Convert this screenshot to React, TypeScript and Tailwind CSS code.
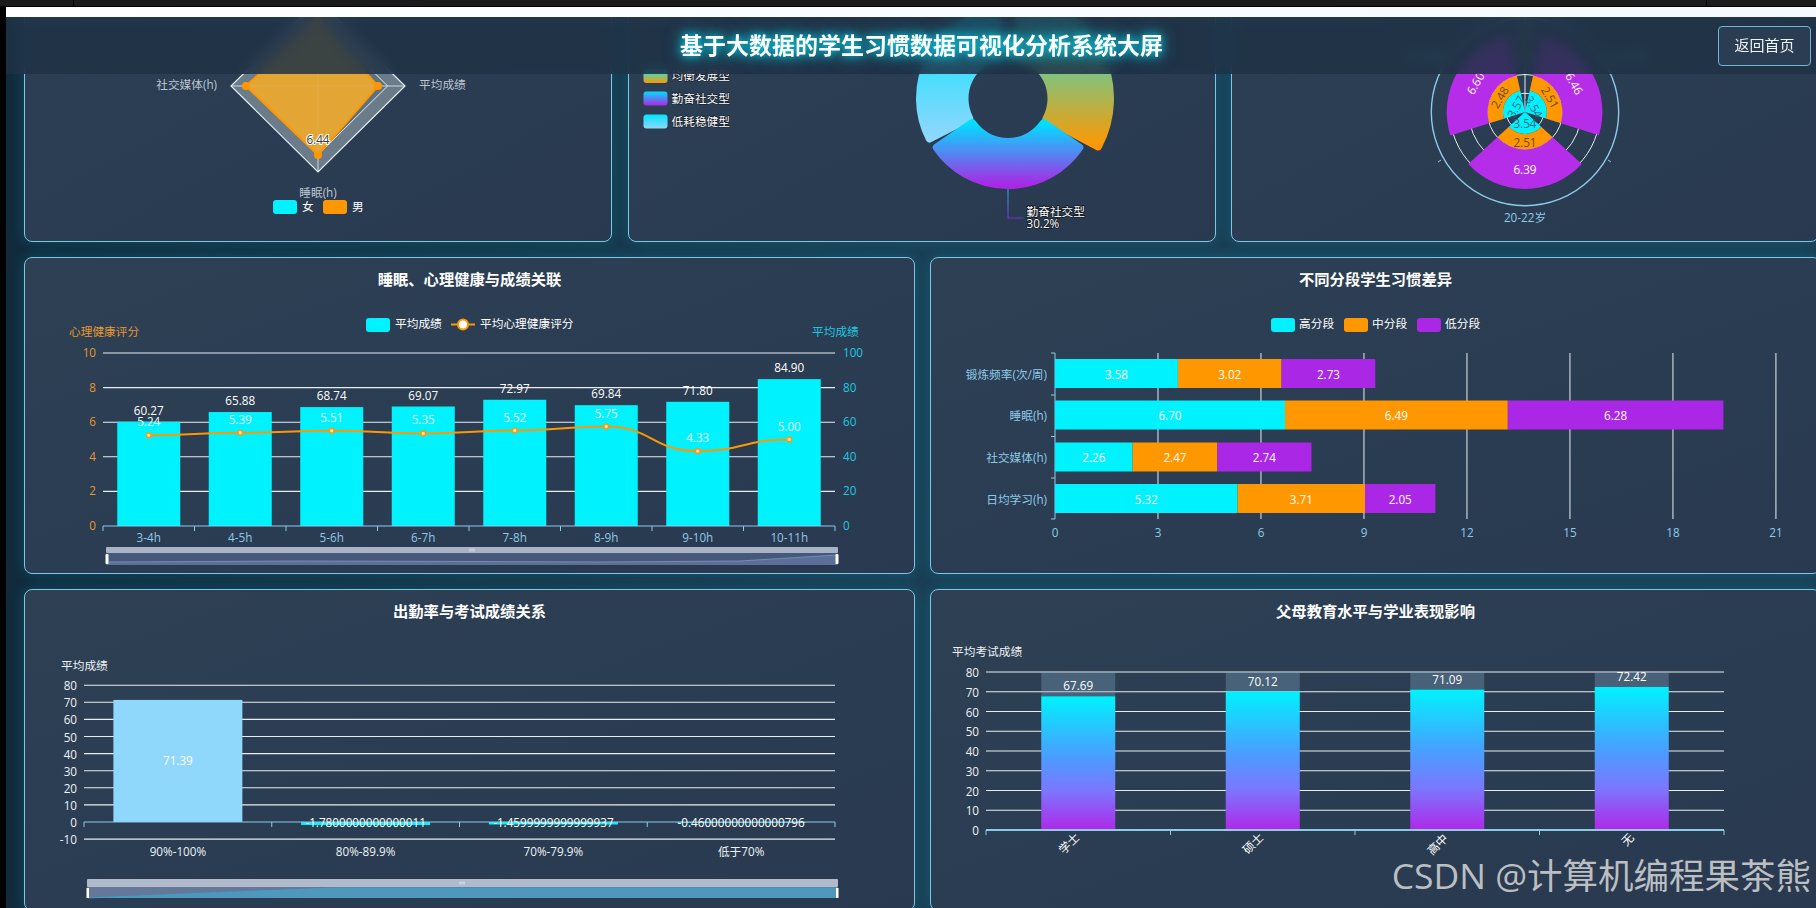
import type { ReactNode, SVGProps } from "react";

const CYAN = "#00f2ff";
const ORANGE = "#ff9800";
const PURPLE = "#ab27e6";
const SKY = "#8ccae8";
const GRID = "#e8eef3";

function Label({ x, y, anchor = "middle", fill = "#ffffff", size = 11.7, children, ...rest }: {
  x: number;
  y: number;
  anchor?: "start" | "middle" | "end";
  fill?: string;
  size?: number;
  children: ReactNode;
} & SVGProps<SVGTextElement>) {
  return (
    <text x={x} y={y} textAnchor={anchor} fill={fill} fontSize={size} dominantBaseline="central" {...rest}>
      {children}
    </text>
  );
}

function Card({ x, y, w, h, title, children }: { x: number; y: number; w: number; h: number; title?: string; children: ReactNode }) {
  const top = title ? 40 : 0;
  return (
    <div className="flex flex-col rounded-lg border border-[#7cc6e6] bg-gradient-to-br from-[#2d4054] to-[#293a50] shadow-[0_0_14px_rgba(0,220,255,0.18)]">
      {title && (
        <div className="flex h-[40px] shrink-0 items-center justify-center pt-[3px] text-[15.3px] font-bold text-white">
          {title}
        </div>
      )}
      <svg
        className="block overflow-hidden"
        width={w - 2}
        height={h - 2 - top}
        viewBox={`${x + 1} ${y + 1 + top} ${w - 2} ${h - 2 - top}`}
      >
        {children}
      </svg>
    </div>
  );
}

// angles are degrees clockwise from 12 o'clock
function pt(cx: number, cy: number, r: number, deg: number) {
  const a = (deg * Math.PI) / 180;
  return `${(cx + r * Math.sin(a)).toFixed(2)} ${(cy - r * Math.cos(a)).toFixed(2)}`;
}

function sector(cx: number, cy: number, r0: number, r1: number, a0: number, a1: number) {
  const big = a1 - a0 > 180 ? 1 : 0;
  return `M${pt(cx, cy, r1, a0)} A${r1} ${r1} 0 ${big} 1 ${pt(cx, cy, r1, a1)} L${pt(cx, cy, r0, a1)} A${r0} ${r0} 0 ${big} 0 ${pt(cx, cy, r0, a0)} Z`;
}

function RadarChart() {
  const cx = 318;
  const cy = 86;
  const ring = (k: number) => `${cx},${cy - 86 * k} ${cx + 87 * k},${cy} ${cx},${cy + 86 * k} ${cx - 87 * k},${cy}`;
  return (
    <g>
      <polygon points={ring(1)} fill="#6a7b8a" stroke={GRID} strokeWidth={1.2} />
      <polygon points={ring(0.8)} fill="#5e7183" stroke={GRID} strokeWidth={1} />
      <polygon points={ring(0.6)} fill="#6a7b8a" stroke={GRID} strokeWidth={1} />
      <line x1={cx - 87} y1={cy} x2={cx + 87} y2={cy} stroke={GRID} strokeWidth={0.8} />
      <line x1={cx} y1={cy - 86} x2={cx} y2={cy + 86} stroke={GRID} strokeWidth={0.8} />
      <polygon points="318,20 378,86 318,155 246,86" fill="#e3a635" stroke={ORANGE} strokeWidth={2} />
      <line x1={246} y1={86} x2={378} y2={86} stroke="#e8b355" strokeWidth={0.6} />
      <line x1={318} y1={20} x2={318} y2={155} stroke="#e8b355" strokeWidth={0.6} />
      {[[378, 86], [318, 155], [246, 86], [318, 20]].map(([px, py]) => (
        <circle key={px + "-" + py} cx={px} cy={py} r={4} fill={ORANGE} />
      ))}
      <Label x={318} y={139} fill="#3a3a3a" stroke="#ffffff" strokeWidth={2} paintOrder="stroke">6.44</Label>
      <Label x={217} y={84} anchor="end" fill="#bcc6d0">社交媒体(h)</Label>
      <Label x={419} y={84} anchor="start" fill="#bcc6d0">平均成绩</Label>
      <Label x={318} y={192} fill="#bcc6d0">睡眠(h)</Label>
      <rect x={273} y={200} width={24} height={14} rx={3} fill={CYAN} />
      <Label x={302} y={206} anchor="start">女</Label>
      <rect x={323} y={200} width={24} height={14} rx={3} fill={ORANGE} />
      <Label x={352} y={206} anchor="start">男</Label>
    </g>
  );
}

function DonutChart() {
  const cx = 1007.5;
  const cy = 98.5;
  return (
    <g>
      <defs>
        <linearGradient id="gBalance" x1="0" y1="0" x2="0" y2="1">
          <stop offset="0" stopColor="#00f0ff" />
          <stop offset="1" stopColor={ORANGE} />
        </linearGradient>
        <linearGradient id="gSocial" x1="0" y1="0" x2="0" y2="1">
          <stop offset="0" stopColor="#00e0ff" />
          <stop offset="1" stopColor={PURPLE} />
        </linearGradient>
        <linearGradient id="gSteady" x1="0" y1="0" x2="0" y2="1">
          <stop offset="0" stopColor="#00e5ff" />
          <stop offset="1" stopColor="#90d7fc" />
        </linearGradient>
        <linearGradient id="gLead" x1="0" y1="0" x2="0" y2="1">
          <stop offset="0" stopColor="#1fa8c8" />
          <stop offset="1" stopColor="#7a2fd0" />
        </linearGradient>
      </defs>
      <rect x={643} y={69} width={24} height={14} rx={3} fill="url(#gBalance)" />
      <rect x={643} y={91.5} width={24} height={14} rx={3} fill="url(#gSocial)" />
      <rect x={643} y={114.5} width={24} height={14} rx={3} fill="url(#gSteady)" />
      {["均衡发展型", "勤奋社交型", "低耗稳健型"].map((t, i) => (
        <Label key={t} x={671} y={74.5 + i * 23} anchor="start" stroke="#10161f" strokeWidth={1} paintOrder="stroke">{t}</Label>
      ))}
      <path d={sector(cx, cy, 43.5, 102, 8, 118)} fill="url(#gBalance)" stroke="url(#gBalance)" strokeWidth={8} strokeLinejoin="round" />
      <path d={sector(cx, cy, 43.5, 88, 243, 352)} fill="url(#gSteady)" stroke="url(#gSteady)" strokeWidth={8} strokeLinejoin="round" />
      <path d={sector(cx, cy, 43.5, 86.5, 124.5, 235.5)} fill="url(#gSocial)" stroke="url(#gSocial)" strokeWidth={8} strokeLinejoin="round" />
      <path d="M1007.5 189 V218 H1023" fill="none" stroke="url(#gLead)" strokeWidth={1.2} />
      <Label x={1026} y={211} anchor="start" stroke="#10161f" strokeWidth={1.4} paintOrder="stroke">勤奋社交型</Label>
      <Label x={1026} y={223} anchor="start" stroke="#10161f" strokeWidth={1.4} paintOrder="stroke">30.2%</Label>
    </g>
  );
}

function PolarChart() {
  const cx = 1525;
  const cy = 112;
  const unit = 6.19;
  const groups = [
    { mid: 300, rot: -60, vals: [3.57, 2.48, 6.6] },
    { mid: 60, rot: 60, vals: [3.54, 2.51, 6.46] },
    { mid: 180, rot: 0, vals: [3.54, 2.51, 6.39] },
  ];
  const colors = [CYAN, ORANGE, "#b52de8"];
  const textColors = ["#236b78", "#6b4a14", "#ffffff"];
  return (
    <g>
      {[18.75, 37.5, 56.25, 75].map((r) => (
        <circle key={r} cx={cx} cy={cy} r={r} fill="none" stroke={GRID} strokeWidth={1} />
      ))}
      <circle cx={cx} cy={cy} r={93.7} fill="none" stroke={SKY} strokeWidth={1.4} />
      <line x1={cx} y1={cy} x2={cx} y2={cy - 93.7} stroke={GRID} strokeWidth={1} />
      <line x1={1441} y1={160} x2={1438} y2={162} stroke={SKY} />
      <line x1={1608} y1={160} x2={1611} y2={162} stroke={SKY} />
      {groups.map((g) => {
        let acc = 0;
        return g.vals.map((v, i) => {
          const r0 = acc * unit;
          const r1 = (acc + v) * unit;
          acc += v;
          const mid = i === 0 ? r1 * 0.5 : (r0 + r1) / 2;
          const p = pt(cx, cy, mid, g.mid).split(" ").map(Number);
          return (
            <g key={g.mid + "-" + i}>
              <path d={sector(cx, cy, Math.max(r0, 0.1), r1, g.mid - 47.5, g.mid + 47.5)} fill={colors[i]} />
              <Label x={p[0]} y={p[1]} fill={textColors[i]} transform={`rotate(${g.rot} ${p[0]} ${p[1]})`}>
                {v.toFixed(2)}
              </Label>
            </g>
          );
        });
      })}
      <Label x={1525} y={217} fill={SKY}>20-22岁</Label>
      <Label x={1424} y={56} fill={SKY}>18-20岁</Label>
      <Label x={1628} y={56} fill={SKY}>22-24岁</Label>
    </g>
  );
}

function SleepChart() {
  const data = [
    ["3-4h", 60.27, 5.24], ["4-5h", 65.88, 5.39], ["5-6h", 68.74, 5.51], ["6-7h", 69.07, 5.35],
    ["7-8h", 72.97, 5.52], ["8-9h", 69.84, 5.75], ["9-10h", 71.8, 4.33], ["10-11h", 84.9, 5.0],
  ] as const;
  const x0 = 103;
  const x1 = 835;
  const base = 526;
  const band = (x1 - x0) / 8;
  const cxs = data.map((_, i) => x0 + band * (i + 0.5));
  const ly = (v: number) => base - v * 17.3;
  let curve = `M${cxs[0]} ${ly(data[0][2])}`;
  for (let i = 1; i < data.length; i++) {
    const mx = (cxs[i - 1] + cxs[i]) / 2;
    curve += ` C${mx} ${ly(data[i - 1][2])} ${mx} ${ly(data[i][2])} ${cxs[i]} ${ly(data[i][2])}`;
  }
  return (
    <g>
      <rect x={366} y={318} width={24} height={14} rx={3} fill={CYAN} />
      <Label x={395} y={323} anchor="start">平均成绩</Label>
      <line x1={451} y1={324.5} x2={475} y2={324.5} stroke={ORANGE} strokeWidth={2} />
      <circle cx={463} cy={324.5} r={5} fill="#ffffff" stroke={ORANGE} strokeWidth={2} />
      <Label x={480} y={323} anchor="start">平均心理健康评分</Label>
      <Label x={69} y={331} anchor="start" fill="#e6962d">心理健康评分</Label>
      <Label x={812} y={331} anchor="start" fill="#1fc8e0">平均成绩</Label>
      {[0, 2, 4, 6, 8, 10].map((v) => (
        <g key={v}>
          {v > 0 && <line x1={x0} y1={ly(v)} x2={x1} y2={ly(v)} stroke={GRID} strokeWidth={1.1} />}
          <Label x={96} y={ly(v) - 1} anchor="end" fill="#e6962d">{v}</Label>
          <Label x={843} y={ly(v) - 1} anchor="start" fill="#1fc8e0">{v * 10}</Label>
        </g>
      ))}
      {data.map((d, i) => (
        <rect key={d[0]} x={cxs[i] - 31.5} y={base - d[1] * 1.73} width={63} height={d[1] * 1.73} fill={CYAN} />
      ))}
      <line x1={x0} y1={base} x2={x1} y2={base} stroke={SKY} strokeWidth={1.2} />
      {data.map((_, i) => (
        <line key={i} x1={x0 + band * i} y1={base} x2={x0 + band * i} y2={base + 5} stroke={SKY} />
      ))}
      <line x1={x1} y1={base} x2={x1} y2={base + 5} stroke={SKY} />
      <path d={curve} fill="none" stroke={ORANGE} strokeWidth={2} />
      {data.map((d, i) => (
        <g key={d[0]}>
          <circle cx={cxs[i]} cy={ly(d[2])} r={2.4} fill="#ffe0a8" stroke={ORANGE} strokeWidth={1.4} />
          <Label x={cxs[i]} y={base - d[1] * 1.73 - 12}>{d[1].toFixed(2)}</Label>
          <Label x={cxs[i]} y={ly(d[2]) - 14} fill="#e4fdff">{d[2].toFixed(2)}</Label>
          <Label x={cxs[i]} y={537} fill={SKY}>{d[0]}</Label>
        </g>
      ))}
      <rect x={106} y={547} width={732} height={6} rx={1} fill="#aab3c6" />
      <rect x={106} y={553} width={732} height={12} fill="#46597a" />
      <path d="M107 565 V562 L300 561 L480 561.5 L600 562 L740 561 L837 555 V565 Z" fill="#5a7099" />
      <path d="M107 562 L300 561 L480 561.5 L600 562 L740 561 L837 555" fill="none" stroke="#7f96bf" strokeWidth={0.8} />
      <rect x={105.5} y={554} width={3} height={10} rx={1} fill="#ffffff" />
      <rect x={835.5} y={554} width={3} height={10} rx={1} fill="#ffffff" />
      <path d="M470 548.5 v3 M472 548.5 v3 M474 548.5 v3" stroke="#e8edf3" strokeWidth={0.8} />
    </g>
  );
}

function HabitChart() {
  const x0 = 1055;
  const unit = 34.33;
  const rows = [
    ["锻炼频率(次/周)", 373.5, [3.58, 3.02, 2.73]],
    ["睡眠(h)", 415, [6.7, 6.49, 6.28]],
    ["社交媒体(h)", 457, [2.26, 2.47, 2.74]],
    ["日均学习(h)", 498.5, [5.32, 3.71, 2.05]],
  ] as const;
  const colors = [CYAN, ORANGE, PURPLE];
  return (
    <g>
      {[[1271, "高分段", CYAN], [1344, "中分段", ORANGE], [1417, "低分段", PURPLE]].map(([lx, t, c]) => (
        <g key={t as string}>
          <rect x={lx as number} y={318} width={24} height={14} rx={3} fill={c as string} />
          <Label x={(lx as number) + 28} y={323} anchor="start">{t}</Label>
        </g>
      ))}
      {[0, 3, 6, 9, 12, 15, 18, 21].map((v) => (
        <g key={v}>
          {v > 0 && <line x1={x0 + v * unit} y1={353} x2={x0 + v * unit} y2={519} stroke={GRID} strokeWidth={1} />}
          <Label x={x0 + v * unit} y={532} fill={SKY}>{v}</Label>
        </g>
      ))}
      <line x1={x0} y1={353} x2={x0} y2={519} stroke={SKY} strokeWidth={1} />
      {[353, 395, 436.5, 478, 519].map((ty) => (
        <line key={ty} x1={x0 - 4} y1={ty} x2={x0} y2={ty} stroke={SKY} />
      ))}
      {rows.map(([name, cy, vals]) => {
        let acc = 0;
        return (
          <g key={name}>
            <Label x={1047} y={cy} anchor="end" fill={SKY}>{name}</Label>
            {vals.map((v, i) => {
              const bx = x0 + acc * unit;
              acc += v;
              return (
                <g key={i}>
                  <rect x={bx} y={cy - 14.5} width={v * unit} height={29} fill={colors[i]} />
                  <Label x={bx + (v * unit) / 2} y={cy}>{v.toFixed(2)}</Label>
                </g>
              );
            })}
          </g>
        );
      })}
    </g>
  );
}

function AttendanceChart() {
  const x0 = 84;
  const x1 = 835;
  const base = 822;
  const band = (x1 - x0) / 4;
  const cxs = [0, 1, 2, 3].map((i) => x0 + band * (i + 0.5));
  const ticks = [80, 70, 60, 50, 40, 30, 20, 10, 0, -10];
  const rows = [
    ["90%-100%", "71.39"],
    ["80%-89.9%", "-1.7800000000000011"],
    ["70%-79.9%", "-1.4599999999999937"],
    ["低于70%", "-0.46000000000000796"],
  ];
  return (
    <g>
      <Label x={61} y={665} anchor="start" fill="#eef2f6">平均成绩</Label>
      {ticks.map((v) => {
        const ty = base - v * 1.71;
        return (
          <g key={v}>
            {v !== 0 && <line x1={x0} y1={ty} x2={x1} y2={ty} stroke={GRID} strokeWidth={1.1} />}
            <Label x={77} y={ty} anchor="end" fill="#eef2f6">{v}</Label>
          </g>
        );
      })}
      <rect x={cxs[0] - 64.5} y={base - 71.39 * 1.71} width={129} height={71.39 * 1.71} fill="#90d7fc" />
      <rect x={cxs[1] - 64.5} y={base} width={129} height={3} fill={CYAN} />
      <rect x={cxs[2] - 64.5} y={base} width={129} height={2.5} fill={CYAN} />
      <rect x={cxs[3] - 64.5} y={base} width={129} height={0.8} fill={CYAN} />
      <line x1={x0} y1={base} x2={x1} y2={base} stroke={SKY} strokeWidth={1.2} />
      {[0, 1, 2, 3, 4].map((i) => (
        <line key={i} x1={x0 + band * i} y1={base} x2={x0 + band * i} y2={base + 5} stroke={SKY} />
      ))}
      {rows.map(([name, val], i) => (
        <g key={name}>
          <Label x={cxs[i]} y={i === 0 ? 760 : 822}>{val}</Label>
          <Label x={cxs[i]} y={851} fill="#eef2f6">{name}</Label>
        </g>
      ))}
      <rect x={87} y={879} width={751} height={8} rx={1} fill="#b0bacb" />
      <rect x={87} y={887} width={751} height={11} fill="#64799a" />
      <path d="M88 898 L333 888 H837 V898 Z" fill="#4f97bb" />
      <path d="M88 898 L333 888 H837" fill="none" stroke="#3aa4cf" strokeWidth={0.8} />
      <rect x={86.5} y={888} width={2.5} height={10} fill="#ffffff" />
      <rect x={836} y={888} width={2.5} height={10} fill="#ffffff" />
      <path d="M460 881.5 v3 M462 881.5 v3 M464 881.5 v3" stroke="#eef2f6" strokeWidth={0.8} />
    </g>
  );
}

function ParentChart() {
  const x0 = 986;
  const x1 = 1724;
  const base = 830;
  const band = (x1 - x0) / 4;
  const rows = [["学士", 67.69], ["硕士", 70.12], ["高中", 71.09], ["无", 72.42]] as const;
  const labelPos = [[1068.6, 843], [1252.6, 843], [1437, 844], [1627, 839]];
  return (
    <g>
      <defs>
        <linearGradient id="gBar" x1="0" y1="0" x2="0" y2="1">
          <stop offset="0" stopColor="#00f2ff" />
          <stop offset="0.45" stopColor="#4a9dff" />
          <stop offset="0.7" stopColor="#7a78ff" />
          <stop offset="1" stopColor="#b028e8" />
        </linearGradient>
      </defs>
      <Label x={952} y={651} anchor="start" fill="#eef2f6">平均考试成绩</Label>
      {[0, 10, 20, 30, 40, 50, 60, 70, 80].map((v) => {
        const ty = base - v * 1.975;
        return (
          <g key={v}>
            {v > 0 && <line x1={x0} y1={ty} x2={x1} y2={ty} stroke={GRID} strokeWidth={1.1} />}
            <Label x={979} y={ty} anchor="end" fill="#eef2f6">{v}</Label>
          </g>
        );
      })}
      {rows.map(([name, v], i) => {
        const cx = x0 + band * (i + 0.5);
        const top = base - v * 1.975;
        return (
          <g key={name}>
            <rect x={cx - 37} y={672} width={74} height={top - 672} fill="#7fa6c0" fillOpacity={0.35} />
            <rect x={cx - 37} y={top} width={74} height={base - top} fill="url(#gBar)" />
            <Label x={cx} y={top - 11}>{v.toFixed(2)}</Label>
            <Label x={labelPos[i][0]} y={labelPos[i][1]} transform={`rotate(-45 ${labelPos[i][0]} ${labelPos[i][1]})`}>{name}</Label>
          </g>
        );
      })}
      <line x1={x0} y1={base} x2={x1} y2={base} stroke={SKY} strokeWidth={2} />
      {[0, 1, 2, 3, 4].map((i) => (
        <line key={i} x1={x0 + band * i} y1={base} x2={x0 + band * i} y2={base + 5} stroke={SKY} />
      ))}
    </g>
  );
}

export default function App() {
  return (
    <div className="relative flex h-[908px] w-[1816px] flex-col overflow-hidden bg-black font-['Open_Sans','Noto_Sans_CJK_SC',sans-serif]">
      {/* browser chrome left over in the capture */}
      <div className="flex h-[7px] shrink-0 border-b border-black bg-[#1b1b1b]">
        <div className="w-[74px] border-r border-black" />
        <div className="w-[1633px] border-r border-black" />
      </div>
      <div className="ml-[6px] h-[10px] shrink-0 bg-gradient-to-r from-white to-[#f6f9fd]" />

      <div className="relative ml-[6px] flex-1 overflow-hidden bg-gradient-to-r from-[#112b3d] via-[#1a3e54] to-[#1a3e54]">
        <div className="absolute left-0 right-0 top-0 z-10 flex h-[57px] items-center bg-[rgba(31,49,69,0.85)] backdrop-blur-[6px]">
          <div className="ml-[119px] flex-1 text-center text-[23px] font-bold text-white [text-shadow:0_0_10px_#00e5ff,0_0_18px_rgba(0,229,255,0.55)]">
            基于大数据的学生习惯数据可视化分析系统大屏
          </div>
          <button className="mr-[5px] h-[40px] w-[93px] rounded border border-[#6fb7d6] bg-[#2b3d52] text-[15px] text-[#eef3f7]">
            返回首页
          </button>
        </div>

        <div className="ml-[18px] mt-[-92px] flex w-[1797px] flex-col gap-[15px]">
          <div className="grid h-[317px] grid-cols-[588px_588px_588px] gap-[15.5px]">
            <Card x={24} y={-75} w={588} h={317}><RadarChart /></Card>
            <Card x={627.5} y={-75} w={588} h={317}><DonutChart /></Card>
            <Card x={1231} y={-75} w={588} h={317}><PolarChart /></Card>
          </div>
          <div className="grid h-[317px] grid-cols-[891px_891px] gap-[15px]">
            <Card x={24} y={257} w={891} h={317} title="睡眠、心理健康与成绩关联"><SleepChart /></Card>
            <Card x={930} y={257} w={891} h={317} title="不同分段学生习惯差异"><HabitChart /></Card>
          </div>
          <div className="grid h-[322px] grid-cols-[891px_891px] gap-[15px]">
            <Card x={24} y={589} w={891} h={322} title="出勤率与考试成绩关系"><AttendanceChart /></Card>
            <Card x={930} y={589} w={891} h={322} title="父母教育水平与学业表现影响"><ParentChart /></Card>
          </div>
        </div>

        <div className="absolute bottom-[15px] right-[5px] z-10 whitespace-nowrap text-[35.5px] leading-none text-[#bcbfc2]">
          CSDN @计算机编程果茶熊
        </div>
      </div>
    </div>
  );
}
